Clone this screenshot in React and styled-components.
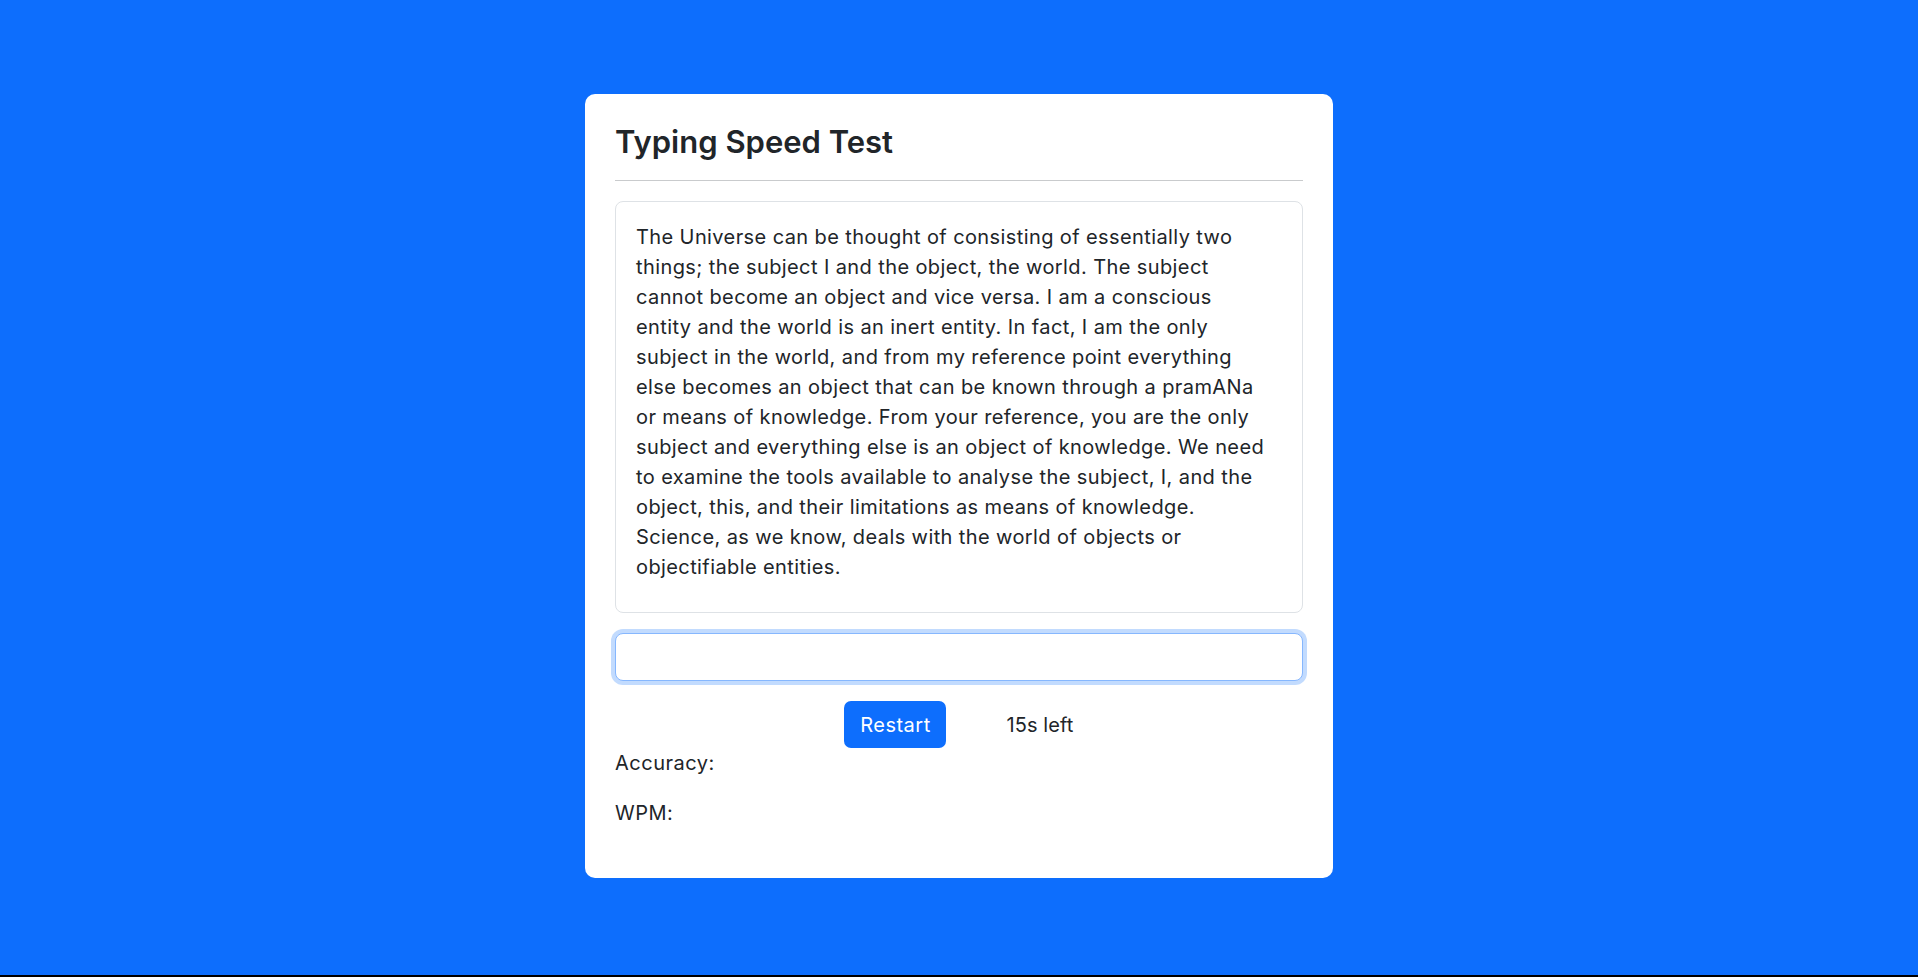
import React from 'react';
import styled, { createGlobalStyle } from 'styled-components';

const GlobalStyle = createGlobalStyle`
    html, body {
        margin: 0;
        padding: 0;
        background: #0d6efd;
    }
    body {
        font-family: 'Inter', 'Noto Sans', sans-serif;
        color: #212529;
        height: 977px;
        border-bottom: 2px solid #000;
        box-sizing: border-box;
    }
`;

const Page = styled.div`
    display: flex;
    justify-content: center;
    padding-top: 94px;
`;

const Card = styled.div`
    width: 748px;
    box-sizing: border-box;
    background: #fff;
    border-radius: 10px;
    padding: 30px 30px 30px;
`;

const Title = styled.h2`
    margin: 0;
    font-size: 31px;
    line-height: 36px;
    font-weight: 600;
    color: #212529;
`;

const Divider = styled.hr`
    border: 0;
    border-top: 1px solid #c9cbcd;
    margin: 20px 0 20px;
`;

const Passage = styled.div`
    border: 1px solid #dee2e6;
    border-radius: 8px;
    padding: 20px 20px 30px;
    font-size: 20px;
    line-height: 30px;
    letter-spacing: 0.4px;
`;

const Line = styled.span`
    display: block;
    white-space: nowrap;
`;

const TypeBox = styled.input`
    display: block;
    width: 100%;
    box-sizing: border-box;
    height: 48px;
    margin-top: 20px;
    border: 1px solid #86b7fe;
    border-radius: 8px;
    box-shadow: 0 0 0 4px rgba(13, 110, 253, 0.25);
    outline: none;
    font-size: 20px;
    padding: 0 16px;
`;

const Controls = styled.div`
    display: flex;
    justify-content: center;
    align-items: center;
    gap: 60px;
    margin-top: 20px;
`;

const RestartButton = styled.button`
    background: #0d6efd;
    color: #fff;
    border: 0;
    border-radius: 7px;
    width: 102px;
    height: 47px;
    font-family: inherit;
    font-size: 20px;
    letter-spacing: 0.5px;
    cursor: pointer;
`;

const TimeLeft = styled.span`
    font-size: 20px;
    letter-spacing: 0.1px;
`;

const Stat = styled.p`
    margin: 0 0 20px;
    font-size: 20px;
    line-height: 30px;
    letter-spacing: 0.5px;
`;

const passage = [
    'The Universe can be thought of consisting of essentially two',
    'things; the subject I and the object, the world. The subject',
    'cannot become an object and vice versa. I am a conscious',
    'entity and the world is an inert entity. In fact, I am the only',
    'subject in the world, and from my reference point everything',
    'else becomes an object that can be known through a pramANa',
    'or means of knowledge. From your reference, you are the only',
    'subject and everything else is an object of knowledge. We need',
    'to examine the tools available to analyse the subject, I, and the',
    'object, this, and their limitations as means of knowledge.',
    'Science, as we know, deals with the world of objects or',
    'objectifiable entities.',
];

export default function App() {
    return (
        <>
            <GlobalStyle />
            <Page>
                <Card>
                    <Title>Typing Speed Test</Title>
                    <Divider />
                    <Passage>
                        {passage.map((line, i) => <Line key={i}>{line}</Line>)}
                    </Passage>
                    <TypeBox type="text" />
                    <Controls>
                        <RestartButton>Restart</RestartButton>
                        <TimeLeft>15s left</TimeLeft>
                    </Controls>
                    <Stat>Accuracy:</Stat>
                    <Stat>WPM:</Stat>
                </Card>
            </Page>
        </>
    );
}
